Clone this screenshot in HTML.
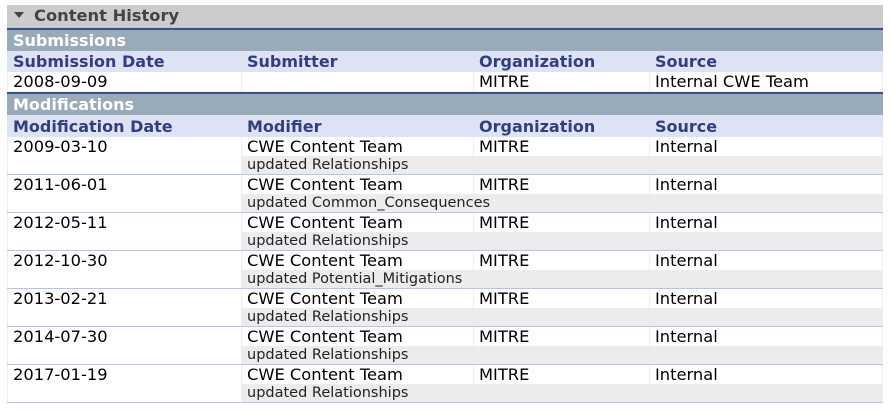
<!DOCTYPE html>
<html><head><style>
body{margin:0;background:#fff;font-family:"DejaVu Sans",Verdana,sans-serif;}
.a{position:absolute;white-space:nowrap;}
.t{font-size:16.3px;color:#000;line-height:20px;}
.h{font-size:16px;font-weight:bold;color:#2f3f7f;line-height:20px;}
.c{font-size:14.5px;color:#222;line-height:18px;}
.sh{font-size:16px;font-weight:bold;color:#fff;line-height:20px;}
</style></head><body>
<div class="a" style="left:7px;top:5px;width:876px;height:22px;background:#cccccc"></div>
<div class="a" style="left:14px;top:12px;width:0;height:0;border-left:5px solid transparent;border-right:5px solid transparent;border-top:6px solid #444"></div>
<div class="a" style="left:34px;top:6px;font-size:16.3px;font-weight:bold;color:#444;line-height:20px">Content History</div>
<div class="a" style="left:7px;top:27px;width:876px;height:1px;background:#b8c4dc"></div>
<div class="a" style="left:7px;top:28px;width:876px;height:2px;background:#3d4e8e"></div>
<div class="a" style="left:7px;top:30px;width:876px;height:21px;background:#99aab8"></div>
<div class="a sh" style="left:13px;top:31px">Submissions</div>
<div class="a" style="left:7px;top:51px;width:876px;height:21px;background:#dde2f4"></div>
<div class="a h" style="left:13px;top:52px">Submission Date</div>
<div class="a h" style="left:247px;top:52px">Submitter</div>
<div class="a h" style="left:479px;top:52px">Organization</div>
<div class="a h" style="left:655px;top:52px">Source</div>
<div class="a" style="left:7px;top:72px;width:874px;height:19px;border:1px solid #eee;border-top:none"></div>
<div class="a" style="left:241px;top:72px;width:1px;height:20px;background:#eee"></div>
<div class="a" style="left:473px;top:72px;width:1px;height:20px;background:#eee"></div>
<div class="a" style="left:649px;top:72px;width:1px;height:20px;background:#eee"></div>
<div class="a t" style="left:13px;top:72px">2008-09-09</div>
<div class="a t" style="left:479px;top:72px">MITRE</div>
<div class="a t" style="left:655px;top:72px">Internal CWE Team</div>
<div class="a" style="left:7px;top:92px;width:876px;height:2px;background:#3d4e8e"></div>
<div class="a" style="left:7px;top:94px;width:876px;height:21px;background:#99aab8"></div>
<div class="a sh" style="left:13px;top:95px">Modifications</div>
<div class="a" style="left:7px;top:115px;width:876px;height:22px;background:#dde2f4"></div>
<div class="a h" style="left:13px;top:117px">Modification Date</div>
<div class="a h" style="left:247px;top:117px">Modifier</div>
<div class="a h" style="left:479px;top:117px">Organization</div>
<div class="a h" style="left:655px;top:117px">Source</div>
<div id="rows"></div>
<script>
var d=[["2009-03-10","updated Relationships"],["2011-06-01","updated Common_Consequences"],["2012-05-11","updated Relationships"],["2012-10-30","updated Potential_Mitigations"],["2013-02-21","updated Relationships"],["2014-07-30","updated Relationships"],["2017-01-19","updated Relationships"]];
var h="";
d.forEach(function(r,i){var y=137+i*38;
h+='<div class="a" style="left:7px;top:'+y+'px;width:1px;height:38px;background:#eee"></div>';
h+='<div class="a" style="left:882px;top:'+y+'px;width:1px;height:38px;background:#eee"></div>';
h+='<div class="a" style="left:241px;top:'+(y+19)+'px;width:641px;height:18px;background:#ececec"></div>';
h+='<div class="a" style="left:241px;top:'+y+'px;width:1px;height:19px;background:#eee"></div>';
h+='<div class="a" style="left:473px;top:'+y+'px;width:1px;height:19px;background:#eee"></div>';
h+='<div class="a" style="left:649px;top:'+y+'px;width:1px;height:19px;background:#eee"></div>';
h+='<div class="a" style="left:7px;top:'+(y+37)+'px;width:876px;height:1px;background:#b4c6e6"></div>';
h+='<div class="a t" style="left:13px;top:'+y+'px">'+r[0]+'</div>';
h+='<div class="a t" style="left:247px;top:'+y+'px">CWE Content Team</div>';
h+='<div class="a t" style="left:479px;top:'+y+'px">MITRE</div>';
h+='<div class="a t" style="left:655px;top:'+y+'px">Internal</div>';
h+='<div class="a c" style="left:247px;top:'+(y+19)+'px">'+r[1]+'</div>';
});
document.getElementById("rows").innerHTML=h;
</script>
</body></html>
